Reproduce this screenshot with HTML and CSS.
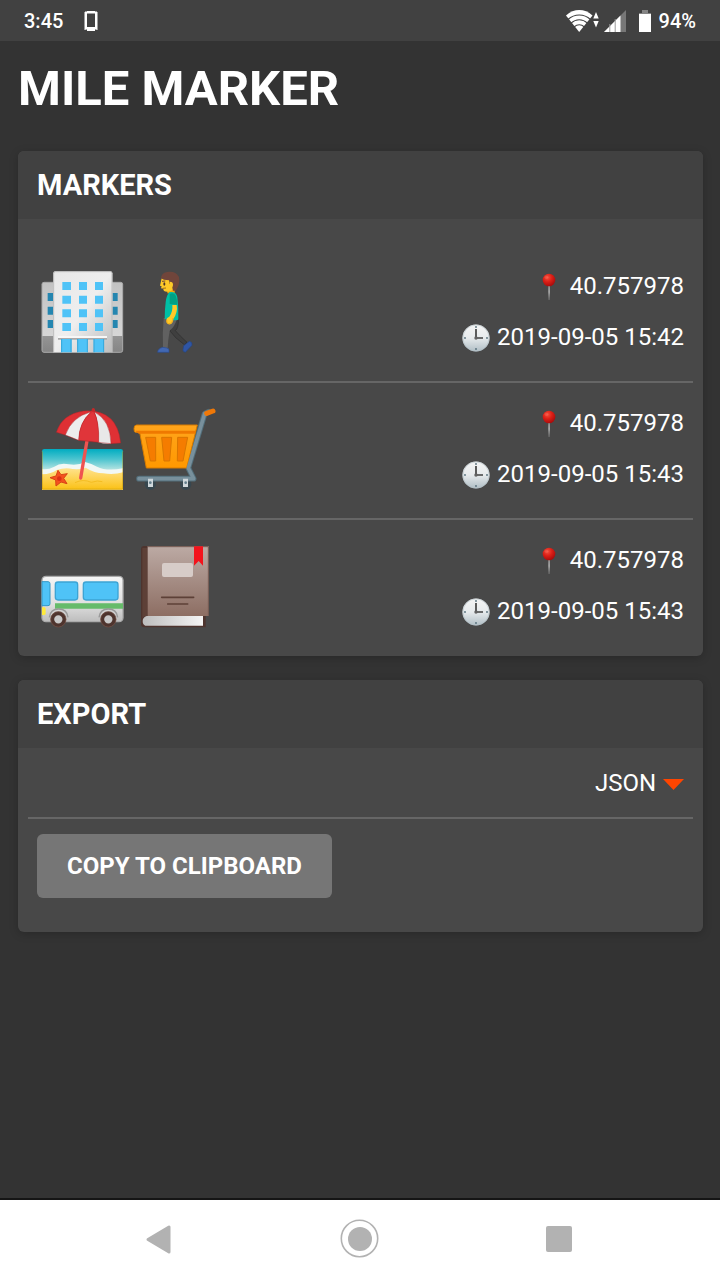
FILE: index.html
```html
<!DOCTYPE html>
<html lang="en">
<head>
<meta charset="utf-8">
<meta name="viewport" content="width=device-width, initial-scale=1">
<title>Mile Marker</title>
<link rel="stylesheet" href="styles.css">
</head>
<body>
<svg class="defs" aria-hidden="true">
  <defs>
    <linearGradient id="wall" x1="0" y1="0" x2="1" y2="1"><stop offset="0" stop-color="#e8e8e8"/><stop offset=".5" stop-color="#eeeeee"/><stop offset="1" stop-color="#bdbdbd"/></linearGradient>
    <linearGradient id="side" x1="0" y1="0" x2="0" y2="1"><stop offset="0" stop-color="#c2c2c2"/><stop offset=".76" stop-color="#d6d6d6"/><stop offset=".76" stop-color="#959595"/><stop offset="1" stop-color="#858585"/></linearGradient>
    <linearGradient id="sea" x1="0" y1="0" x2="0" y2="1"><stop offset="0" stop-color="#00acc1"/><stop offset=".25" stop-color="#4cc4cf"/><stop offset=".55" stop-color="#c5e8e4"/></linearGradient>
    <linearGradient id="sand" x1="0" y1="0" x2="0" y2="1"><stop offset="0" stop-color="#ffe390"/><stop offset="1" stop-color="#fbc114"/></linearGradient>
    <linearGradient id="basket" x1="0" y1="0" x2="0" y2="1"><stop offset="0" stop-color="#ffa51c"/><stop offset="1" stop-color="#ff9800"/></linearGradient>
    <linearGradient id="busbody" x1="0" y1="0" x2="0" y2="1"><stop offset="0" stop-color="#f5f5f5"/><stop offset=".6" stop-color="#e0e0e0"/><stop offset="1" stop-color="#bdbdbd"/></linearGradient>
    <linearGradient id="cover" x1="0" y1="0" x2="0" y2="1"><stop offset="0" stop-color="#bcaaa4"/><stop offset="1" stop-color="#8d6e63"/></linearGradient>
    <linearGradient id="pages" x1="0" y1="0" x2="1" y2="0"><stop offset="0" stop-color="#bdbdbd"/><stop offset="1" stop-color="#f5f5f5"/></linearGradient>
    <radialGradient id="ball" cx=".38" cy=".3" r=".7"><stop offset="0" stop-color="#f4503e"/><stop offset=".5" stop-color="#dc1f16"/><stop offset="1" stop-color="#a90d0d"/></radialGradient>
    <linearGradient id="needle" x1="0" y1="0" x2="0" y2="1"><stop offset="0" stop-color="#777"/><stop offset=".5" stop-color="#ccc"/><stop offset="1" stop-color="#888"/></linearGradient>
    <linearGradient id="dial" x1="0" y1="0" x2="0" y2="1"><stop offset="0" stop-color="#f5f5f5"/><stop offset=".5" stop-color="#e6eaec"/><stop offset="1" stop-color="#b0bec5"/></linearGradient>
    <symbol id="pin" viewBox="0 0 28 28"><path d="M13.200 11h1.800L14.400 27h-.7z" fill="url(#needle)"/><circle cx="14" cy="7" r="6.300" fill="url(#ball)"/><ellipse cx="11.500" cy="4.500" rx="2" ry="1.400" fill="#ff7b6b" opacity=".3"/></symbol>
    <symbol id="clock" viewBox="0 0 28 28"><circle cx="14" cy="14" r="13.600" fill="url(#dial)"/><circle cx="14" cy="14" r="13.100" fill="none" stroke="#b0bec5" opacity=".6"/><path d="M14 5v9h7" fill="none" stroke="#424242" stroke-width="1.700"/><g fill="#546e7a"><circle cx="14" cy="3" r=".9"/><circle cx="25" cy="14" r=".9"/><circle cx="14" cy="25" r=".9"/><circle cx="3" cy="14" r=".9"/></g><circle cx="14" cy="14" r="1.700" fill="#616161"/></symbol>
  </defs>
</svg>

<header class="status">
  <span class="status-group">
    <span>3:45</span>
    <svg class="ic-phone" viewBox="0 0 14 22" aria-hidden="true"><path d="M3 1h8v2H3zM3 19h8v2H3z" fill="#fff"/><path d="M2 2.500h10v16H2z" fill="none" stroke="#fff" stroke-width="2"/><path d="M1 2v18M13 2v18M1 17.500h12" stroke="#fff" stroke-width="1"/></svg>
  </span>
  <span class="status-group status-right">
    <svg class="ic-wifi" viewBox="0 0 34 24" aria-hidden="true">
      <path d="M0 6.500C8-.8 18.500-.8 26.500 6.500L13.200 23z" fill="#fff"/>
      <path d="M2 10.500C8.500 4.500 18 4.500 24.500 10.500M5 14.200C10 9.500 16.500 9.500 21.500 14.200M8 18C11.500 15 15 15 18.500 18" fill="none" stroke="#414141" stroke-width="1.100"/>
      <path d="M27.300 9.500h5.400L30 3zM27.300 12h5.400L30 18.500z" fill="#fff"/>
    </svg>
    <svg class="ic-signal" viewBox="0 0 22 22" aria-hidden="true"><path d="M22 0v22H0z" fill="#777"/><path d="M16.500 5.500V22H0z" fill="#fff"/><path d="M5.800 14v8M11.200 9v13" stroke="#999" stroke-width="1"/></svg>
    <svg class="ic-battery" viewBox="0 0 12 22" aria-hidden="true"><path d="M3 0h6v3h3v2H0V3h3z" fill="#858585"/><path d="M0 4h12v18H0z" fill="#fff"/></svg>
    <span>94%</span>
  </span>
</header>

<main class="page">
  <h1 class="title">MILE MARKER</h1>

  <section class="card">
    <h2 class="card-head">MARKERS</h2>
    <ul class="markers">
      <li class="marker">
        <div class="pics">
          <svg class="pic" viewBox="21 18 276 276" role="img" aria-label="Office building">
            <rect x="36" y="67" width="242" height="210" rx="6" fill="url(#side)" stroke="#aaa" stroke-width="3"/>
            <path d="M53 99h16v24H53zM53 140h16v24H53zM53 180h16v24H53zM247 99h16v24h-16zM247 140h16v24h-16zM247 180h16v24h-16z" fill="#2586b0"/>
            <path d="M70 277V40q0-6 6-6h165q6 0 6 6v237z" fill="url(#wall)"/>
            <path d="M71 277V40q0-5 5-5h165q5 0 5 5v237" fill="none" stroke="#bdbdbd" stroke-width="3"/>
            <path d="M97 66h26v24H97zM147 66h24v24h-24zM195 66h24v24h-24zM97 107h26v24H97zM147 107h24v24h-24zM195 107h24v24h-24zM97 148h26v24H97zM147 148h24v24h-24zM195 148h24v24h-24zM97 189h26v24H97zM147 189h24v24h-24zM195 189h24v24h-24z" fill="#4fc3f7"/>
            <path d="M84 234h147v5H84z" fill="#aaa"/><path d="M84 228h147v6H84z" fill="#f7f7f7"/>
            <path d="M93 237h32v40H93zM142 237h31v40h-31zM191 237h31v40h-31z" fill="#4fc3f7"/>
            <path d="M95 237v40M123 237v40M143 237v40M172 237v40M192 237v40M221 237v40" stroke="#35a6da" stroke-width="3"/>
          </svg>
          <svg class="pic" viewBox="297 18 276 276" role="img" aria-label="Person walking">
            <path d="M421 178h24q1 25-9 34 14 16 35 35l-8 7q-30-21-42-40z" fill="#3f3f3f" stroke="#2d2d2d" stroke-width="2"/>
            <path d="M401 174h41q-8 27-23 38-5 27-6 53h-14q-2-48 2-91z" fill="#616161"/>
            <path d="M461 257l17-13q10 2 8 12l-20 21q-9-2-7-9z" fill="#2f55a4" stroke="#264580" stroke-width="2"/>
            <path d="M398 262q16 1 19 6v9h-34q0-11 15-15z" fill="#4268b3" stroke="#2a4b92" stroke-width="2"/>
            <path d="M412 86h22v14h-22z" fill="#f5a70a"/>
            <path d="M415 97q24-5 27 15 4 34 3 67-18 5-41-3 0-25 3-49 2-21 11-30z" fill="#00bfa5"/>
            <path d="M419 102q23-10 22 32l-22-2z" fill="#00a184"/>
            <path d="M427 135h13q4 21-10 42-1 18-14 16-8-2-7-13 1-8 9-10 11-15 9-35z" fill="#ffca28"/>
            <path d="M429 174q-1 18-14 17-6-2-5-12" fill="none" stroke="#ef9b0d" stroke-width="2"/>
            <path d="M395 55h43q2 38-24 40-15 1-14-9l-7-1 2-6-5-2z" fill="#ffc928"/>
            <path d="M393 55q1-16 18-19 26-4 36 15 4 22-10 41h-8l-4-18-6-2-2-11-15-2z" fill="#70453b"/>
            <path d="M419 65q11 0 10 10t-9 10z" fill="#ffca28"/><ellipse cx="403" cy="72" rx="3" ry="5" fill="#4b342a"/><path d="M396 64l10-1" stroke="#70453b" stroke-width="3"/><path d="M398 85l10-1" stroke="#6d3f20" stroke-width="2"/>
          </svg>
        </div>
        <div class="facts">
          <span class="fact"><svg class="glyph" aria-hidden="true"><use href="#pin"/></svg>40.757978</span>
          <span class="fact"><svg class="glyph" aria-hidden="true"><use href="#clock"/></svg>2019-09-05 15:42</span>
        </div>
      </li>
      <li class="marker">
        <div class="pics">
          <svg class="pic" viewBox="21 9 276 276" role="img" aria-label="Beach with umbrella">
            <path d="M36 269V154q0-7 7-7h229q7 0 7 7v115z" fill="url(#sea)"/>
            <path d="M36 207q18 3 37-7 17-12 43-7 27 5 49-7 20 5 36 14 28 14 78 5v64H36z" fill="#f2f8f5"/>
            <path d="M36 223q29-1 44-13 25-8 48-3 24 2 39-4 27 17 53 17 31 5 59-3v52H36z" fill="url(#sand)"/>
            <path d="M135 248q24-12 49-1 19-7 33-2" fill="none" stroke="#f5bd21" stroke-width="3"/>
            <path d="M37.500 154v113.500h240V154" fill="none" stroke="#b48c00" stroke-opacity=".4" stroke-width="3"/>
            <path d="M84 211l9 13 19-3-11 14 10 16-18-5-15 12-1-18-17-7 18-5z" fill="#f4511e" stroke="#d84315" stroke-width="3"/><circle cx="88" cy="236" r="7" fill="#db3015"/>
            <path d="M172 116l-20 118" stroke="#ef5350" stroke-width="10" stroke-linecap="round"/>
            <path d="M184 38q0-14 6-14t6 14z" fill="#c62828"/>
            <path d="M79 97Q96 42 160 33Q262 26 272 129L243 131L205 127L146 121L106 105z" fill="#df3034"/>
            <path d="M106 105Q126 50 182 36Q147 68 146 121Q126 112 106 105z" fill="#ededed"/>
            <path d="M194 36Q242 62 243 131Q224 133 205 127Q208 66 194 36z" fill="#e8e8e8"/>
            <path d="M146 121Q147 66 184 36h8Q208 66 206 127Q177 119 146 121z" fill="#e0353a"/>
            <path d="M79 97Q96 42 160 33Q262 26 272 129L243 131L205 127L146 121L106 105zM106 105Q126 50 182 36M146 121Q147 66 184 36M206 127Q208 66 192 36M243 131Q242 62 194 36" fill="none" stroke="#a92328" stroke-opacity=".45" stroke-width="3"/>
          </svg>
          <svg class="pic" viewBox="297 9 276 276" role="img" aria-label="Shopping cart">
            <g fill="#37474f"><circle cx="361" cy="253" r="17"/><circle cx="467" cy="253" r="17"/></g>
            <path d="M327 236h164l-16-32 49-163 12-6" fill="none" stroke="#526e7a" stroke-width="17" stroke-linejoin="round" stroke-linecap="round"/>
            <path d="M329 75h173l-32 129H349L329 97h-12q-5 0-5-11t8-11z" fill="url(#basket)" stroke="#d67b00" stroke-width="3"/>
            <path d="M316 92h181l-3 9H326z" fill="#ef7900"/>
            <path d="M347 112h30v71h-16q-7-35-14-71zM395 112h30l-6 71h-17zM443 112h30l-14 71h-17z" fill="#f57c00" stroke="#d97600" stroke-width="3"/>
            <path d="M327 236h164l-16-32 49-163" fill="none" stroke="#78909c" stroke-width="11" stroke-linejoin="round" stroke-linecap="round"/>
            <path d="M530 40l19-7" stroke="#ef7808" stroke-width="15" stroke-linecap="round"/>
            <path d="M354 236h15v25h-15zM459 236h15v25h-15z" fill="#cfd8dc"/><circle cx="361" cy="248" r="4" fill="#607d8b"/><circle cx="467" cy="248" r="4" fill="#607d8b"/>
          </svg>
        </div>
        <div class="facts">
          <span class="fact"><svg class="glyph" aria-hidden="true"><use href="#pin"/></svg>40.757978</span>
          <span class="fact"><svg class="glyph" aria-hidden="true"><use href="#clock"/></svg>2019-09-05 15:43</span>
        </div>
      </li>
      <li class="marker">
        <div class="pics">
          <svg class="pic" viewBox="21 15 276 276" role="img" aria-label="Bus">
            <rect x="36" y="124" width="243" height="136" rx="12" fill="url(#busbody)" stroke="#aaa" stroke-width="4"/>
            <path d="M36 140h18q6 0 6 6v60q0 6-6 6H36z" fill="#4fc3f7" stroke="#3298c7" stroke-width="3"/>
            <rect x="76" y="141" width="67" height="54" rx="8" fill="#4fc3f7" stroke="#3da4d4" stroke-width="4"/>
            <rect x="160" y="141" width="104" height="54" rx="8" fill="#4fc3f7" stroke="#3da4d4" stroke-width="4"/>
            <path d="M75 205h204v16H75z" fill="#66bb6a"/><path d="M36 217h7q4 0 4 5v13q0 5-4 5h-7z" fill="#ffeb3b"/>
            <path d="M58 247q3-25 28-25t28 25M207 247q3-25 28-25t28 25" fill="none" stroke="#999" stroke-width="4"/>
            <g fill="#c8c8c8" stroke="#4e342e" stroke-width="11"><circle cx="85" cy="253" r="18"/><circle cx="235" cy="253" r="18"/></g>
            <g fill="none" stroke="#795548" stroke-width="2"><circle cx="85" cy="253" r="23"/><circle cx="235" cy="253" r="23"/></g>
          </svg>
          <svg class="pic" viewBox="297 15 276 276" role="img" aria-label="Notebook">
            <path d="M343 33h184v244H343q-10 0-10-10V43q0-10 10-10z" fill="#4e342e"/>
            <path d="M337 39h16v204h-9l-7 6z" fill="#5d4037"/>
            <path d="M350 243h169v29H346q-8-3-8-14t12-15z" fill="url(#pages)"/>
            <path d="M353 34h183v209H353z" fill="url(#cover)"/><path d="M353 35h182v207" fill="none" stroke="#765b52" stroke-width="3"/>
            <rect x="396" y="84" width="93" height="42" rx="6" fill="#d7ccc8"/>
            <path d="M395 187h96M413 207h60" stroke="#5d4037" stroke-width="5" stroke-linecap="round"/>
            <path d="M492 34h27v58l-13-14-14 14z" fill="#f3131c"/>
          </svg>
        </div>
        <div class="facts">
          <span class="fact"><svg class="glyph" aria-hidden="true"><use href="#pin"/></svg>40.757978</span>
          <span class="fact"><svg class="glyph" aria-hidden="true"><use href="#clock"/></svg>2019-09-05 15:43</span>
        </div>
      </li>
    </ul>
  </section>

  <section class="card">
    <h2 class="card-head">EXPORT</h2>
    <div class="export">
      <div class="format">
        <select class="format-select" aria-label="Export format"><option>JSON</option></select>
        <svg class="caret" viewBox="0 0 21 11" aria-hidden="true"><path d="M0 0h21L10.500 11z" fill="#ff4500"/></svg>
      </div>
      <button class="copy" type="button">COPY TO CLIPBOARD</button>
    </div>
  </section>
</main>

<nav class="navbar" aria-label="System">
  <button class="nav-btn" type="button" aria-label="Back"><svg class="nav-ic" viewBox="0 0 40 40"><path d="M8 20.500L29 8v25z" fill="#b2b2b2" stroke="#b2b2b2" stroke-width="3" stroke-linejoin="round"/></svg></button>
  <button class="nav-btn" type="button" aria-label="Home"><svg class="nav-ic" viewBox="0 0 40 40"><circle cx="19.500" cy="19.500" r="18.200" fill="none" stroke="#b2b2b2" stroke-width="1.600"/><circle cx="20" cy="20" r="12" fill="#b2b2b2"/></svg></button>
  <button class="nav-btn" type="button" aria-label="Recent apps"><svg class="nav-ic" viewBox="0 0 40 40"><rect x="6" y="7" width="26" height="26" rx="2" fill="#b2b2b2"/></svg></button>
</nav>
</body>
</html>
```
FILE: styles.css
```css
* {
  box-sizing: border-box;
}

body {
  margin: 0;
  min-height: 100vh;
  display: flex;
  flex-direction: column;
  background: #333;
  color: #fff;
  font-family: Roboto, "Liberation Sans", sans-serif;
  font-size: 24px;
}

svg {
  display: block;
}

.defs {
  position: absolute;
  width: 0;
  height: 0;
}

.status {
  display: flex;
  justify-content: space-between;
  align-items: center;
  height: 41px;
  padding: 0 24px;
  background: #414141;
  font-size: 20px;
  font-weight: 500;
}

.status-group {
  display: flex;
  align-items: center;
  gap: 21px;
}

.status-right {
  gap: 8px;
}

.ic-phone {
  width: 14px;
  height: 22px;
}

.ic-wifi {
  width: 34px;
  height: 24px;
  margin-right: -4px;
}

.ic-signal {
  width: 22px;
  height: 22px;
  margin-right: 5px;
}

.ic-battery {
  width: 12px;
  height: 22px;
}

.page {
  flex: 1;
  padding: 0 17px 24px 18px;
}

.title {
  margin: 0;
  padding: 16px 0 30px;
  font-size: 49px;
  line-height: 64px;
  font-weight: 700;
}

.card {
  margin-bottom: 24px;
  border-radius: 6px;
  background: #484848;
  box-shadow: 0 2px 10px rgba(0, 0, 0, 0.2);
}

.card-head {
  margin: 0;
  padding: 0 19px;
  border-radius: 6px 6px 0 0;
  background: #414141;
  font-size: 29px;
  line-height: 68px;
  font-weight: 700;
}

.markers {
  margin: 0;
  padding: 27px 10px 1px;
  list-style: none;
}

.marker {
  display: flex;
  justify-content: space-between;
  align-items: center;
  padding: 15px 9px 18px;
  border-bottom: 2px solid #666;
}

.marker:last-child {
  border-bottom: 0;
}

.pics {
  display: flex;
}

.pic {
  width: 92px;
  height: 92px;
}

.facts {
  display: flex;
  flex-direction: column;
  align-items: flex-end;
}

.fact {
  display: flex;
  align-items: center;
  gap: 7px;
  line-height: 51px;
}

.glyph {
  width: 28px;
  height: 28px;
}

.export {
  padding: 0 10px 34px;
}

.format {
  display: flex;
  justify-content: flex-end;
  align-items: center;
  gap: 6px;
  height: 71px;
  padding: 0 9px;
  margin-bottom: 15px;
  border-bottom: 2px solid #666;
}

.format-select {
  appearance: none;
  padding: 0;
  border: 0;
  background: none;
  color: inherit;
  font: inherit;
}

.caret {
  width: 21px;
  height: 11px;
  margin-top: 4px;
}

.copy {
  margin: 0 9px;
  padding: 0 30px;
  border: 0;
  border-radius: 6px;
  background: #767676;
  color: inherit;
  font: inherit;
  font-weight: 700;
  line-height: 64px;
}

.navbar {
  display: flex;
  justify-content: center;
  border-top: 2px solid #151515;
  background: #fff;
}

.nav-btn {
  display: flex;
  flex: 0 1 200px;
  justify-content: center;
  align-items: center;
  height: 80px;
  padding: 0 0 2px;
  border: 0;
  background: none;
}

.nav-ic {
  width: 40px;
  height: 40px;
}
```
